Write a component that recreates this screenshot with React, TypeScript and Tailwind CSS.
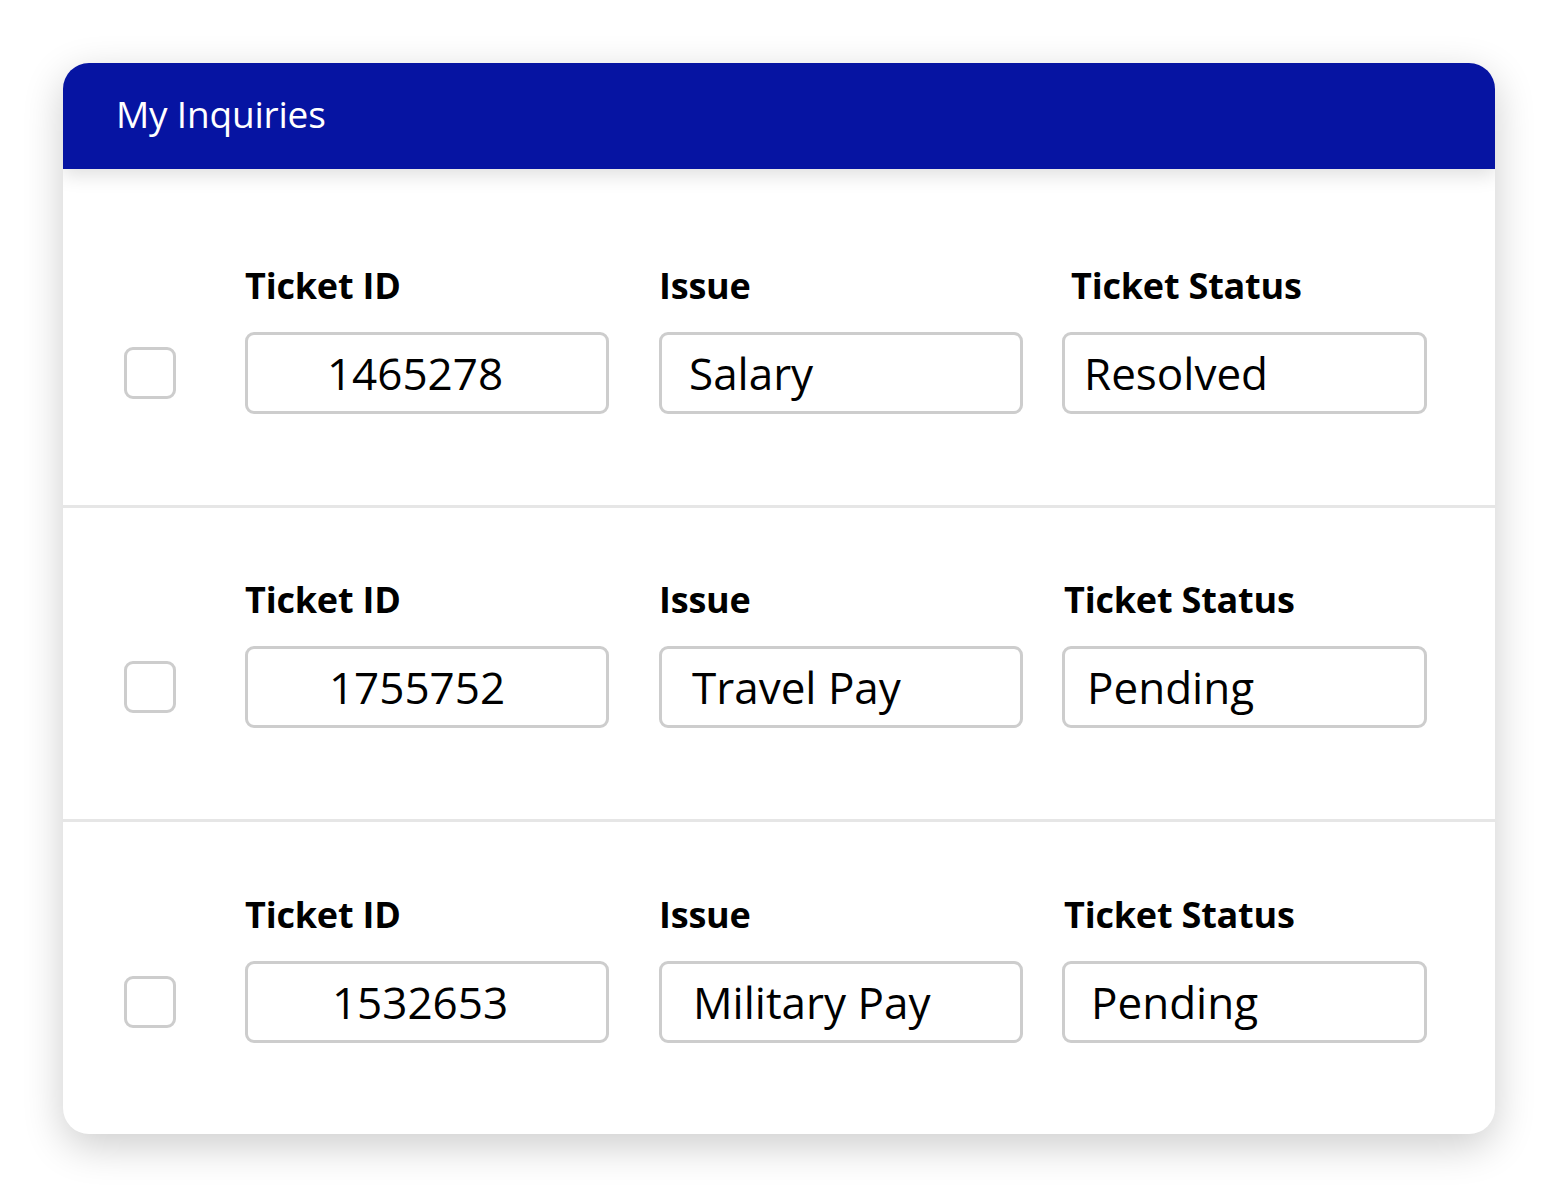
import React from 'react';

interface Inquiry {
  id: string;
  issue: string;
  status: string;
  statusLabelPad: string;
  idPad: string;
  issuePad: string;
  statusPad: string;
  top: string;
}

const inquiries: Inquiry[] = [
  { id: '1465278', issue: 'Salary', status: 'Resolved', statusLabelPad: 'pl-[9px]', idPad: 'pr-[24px]', issuePad: 'pl-[27px]', statusPad: 'pl-[19px]', top: 'pt-[95px]' },
  { id: '1755752', issue: 'Travel Pay', status: 'Pending', statusLabelPad: 'pl-[2px]', idPad: 'pr-[20px]', issuePad: 'pl-[30px]', statusPad: 'pl-[22px]', top: 'pt-[70px]' },
  { id: '1532653', issue: 'Military Pay', status: 'Pending', statusLabelPad: 'pl-[2px]', idPad: 'pr-[14px]', issuePad: 'pl-[31px]', statusPad: 'pl-[26px]', top: 'pt-[71px]' },
];

const Field: React.FC<{ label: string; value: string; width: string; labelPad?: string; valuePad?: string; center?: boolean }> = ({
  label,
  value,
  width,
  labelPad = '',
  valuePad = '',
  center = false,
}) => (
  <div className={`flex flex-col gap-[24px] ${width}`}>
    <div className={`h-[44px] leading-[44px] text-[36px] font-bold text-black tracking-[-0.2px] ${labelPad}`}>{label}</div>
    <div
      className={`h-[82px] rounded-[9px] border-[3px] border-[#cdcdcd] bg-white flex items-center text-[44px] text-black ${
        center ? 'justify-center' : ''
      } ${valuePad}`}
    >
      {value}
    </div>
  </div>
);

const App: React.FC = () => {
  return (
    <div className="w-[1558px] h-[1198px] bg-white pt-[63px] pl-[63px]" style={{ fontFamily: '"Open Sans", "Noto Sans", sans-serif' }}>
      <div className="w-[1432px] h-[1071px] rounded-[26px] bg-white overflow-hidden shadow-[0_12px_40px_rgba(0,0,0,0.2)] flex flex-col">
        <div className="relative z-10 h-[106px] bg-[#0614a2] flex items-center pl-[53px] shadow-[0_6px_18px_rgba(0,0,0,0.13)]">
          <span className="text-white text-[37px] tracking-[-0.2px] pb-[4px]">My Inquiries</span>
        </div>

        {inquiries.map((row, i) => (
          <div key={row.id} className={`${i > 0 ? 'border-t-[3px] border-[#e6e6e6]' : ''} ${row.top} pb-[91px] flex items-end`}>
            <div className="ml-[61px] mb-[15px] w-[52px] h-[52px] rounded-[9px] border-[3px] border-[#cdcdcd] bg-white" />
            <div className="ml-[69px] flex">
              <Field label="Ticket ID" value={row.id} width="w-[364px]" valuePad={row.idPad} center />
              <div className="ml-[50px]">
                <Field label="Issue" value={row.issue} width="w-[364px]" valuePad={row.issuePad} />
              </div>
              <div className="ml-[39px]">
                <Field label="Ticket Status" value={row.status} width="w-[365px]" labelPad={row.statusLabelPad} valuePad={row.statusPad} />
              </div>
            </div>
          </div>
        ))}
      </div>
    </div>
  );
};

export default App;
